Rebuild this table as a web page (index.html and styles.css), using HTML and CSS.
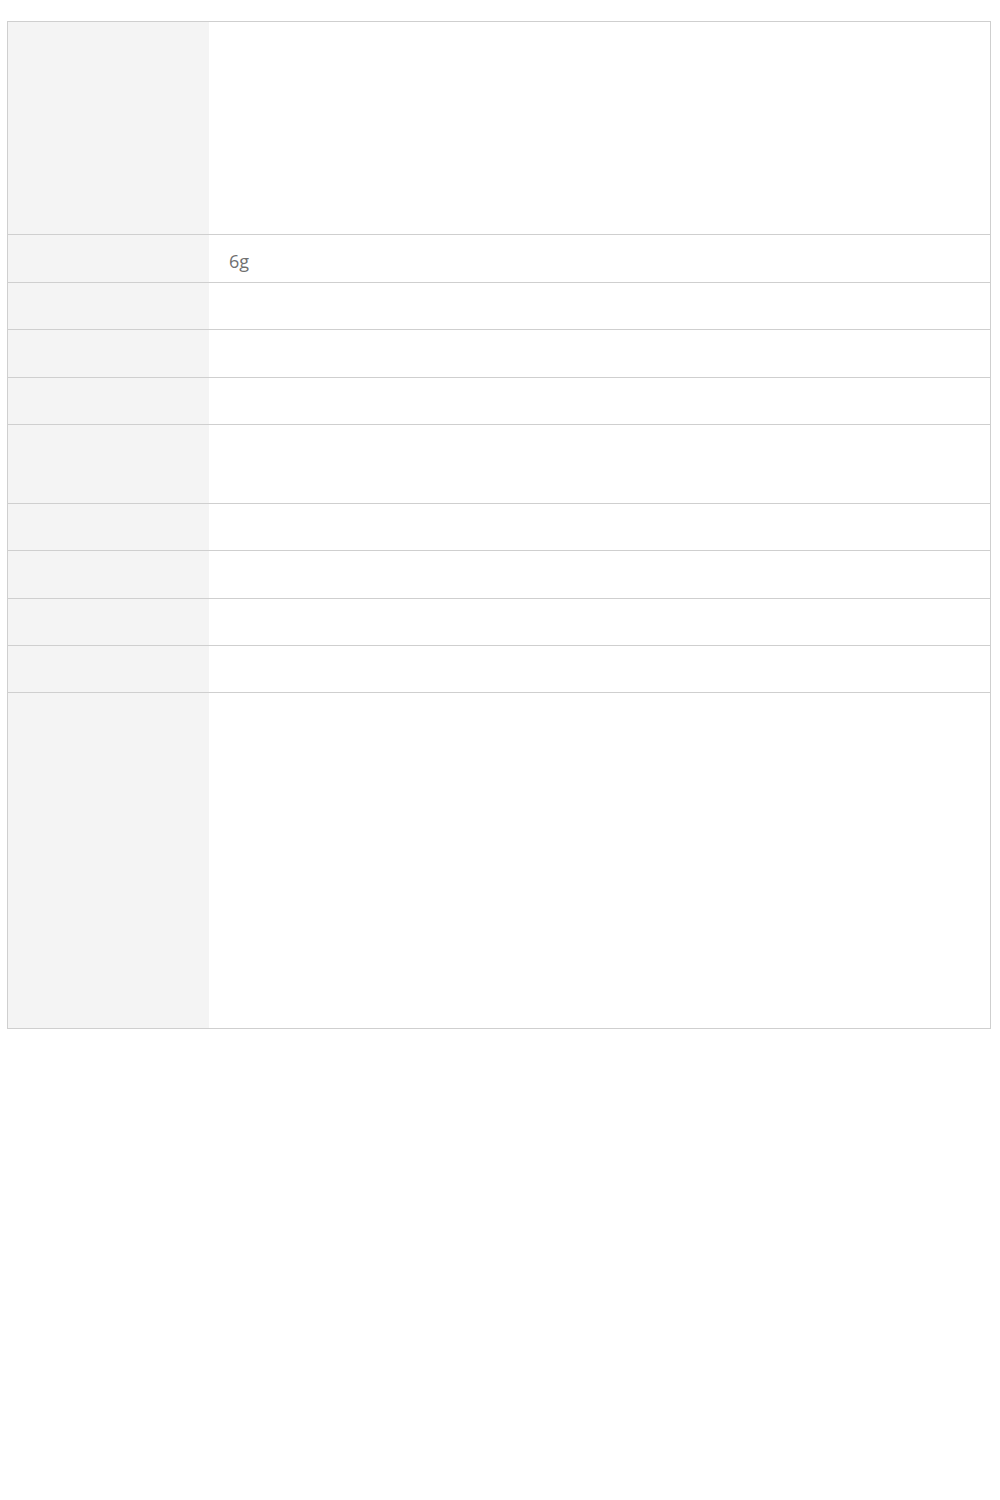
FILE: index.html
```html
<!DOCTYPE html>
<html lang="en">
<head>
    <meta charset="UTF-8">
    <title>Additional information</title>
    <link rel="stylesheet" href="styles.css">
</head>
<body>
    <table class="specs">
        <tr class="row-xl">
            <th></th>
            <td></td>
        </tr>
        <tr>
            <th></th>
            <td class="value">6g</td>
        </tr>
        <tr class="row-sm"><th></th><td></td></tr>
        <tr><th></th><td></td></tr>
        <tr class="row-sm"><th></th><td></td></tr>
        <tr class="row-md"><th></th><td></td></tr>
        <tr class="row-sm"><th></th><td></td></tr>
        <tr><th></th><td></td></tr>
        <tr class="row-sm"><th></th><td></td></tr>
        <tr class="row-sm"><th></th><td></td></tr>
        <tr class="row-xxl"><th></th><td></td></tr>
    </table>
</body>
</html>
```

FILE: styles.css
```css
body {
    margin: 0;
    padding: 21px 9px 0 7px;
    font-family: "Open Sans", sans-serif;
    background: #fff;
}
.specs {
    width: 100%;
    border: 1px solid #cfcfcf;
    border-collapse: separate;
    border-spacing: 0;
}
.specs th,
.specs td {
    height: 47px;
    padding: 0 20px;
    border-top: 1px solid #cfcfcf;
    vertical-align: middle;
    font-size: 18px;
    line-height: 1.5;
    color: #707070;
    font-weight: normal;
    text-align: left;
}
.specs tr:first-child th,
.specs tr:first-child td {
    border-top: none;
}
.specs th {
    width: 201px;
    padding: 0;
    background: #f4f4f4;
}
.specs .value {
    height: 42px;
    padding-top: 5px;
}
.specs .row-sm th,
.specs .row-sm td {
    height: 46px;
}
.specs .row-md th,
.specs .row-md td {
    height: 78px;
}
.specs .row-xl th,
.specs .row-xl td {
    height: 212px;
}
.specs .row-xxl th,
.specs .row-xxl td {
    height: 335px;
}
```
